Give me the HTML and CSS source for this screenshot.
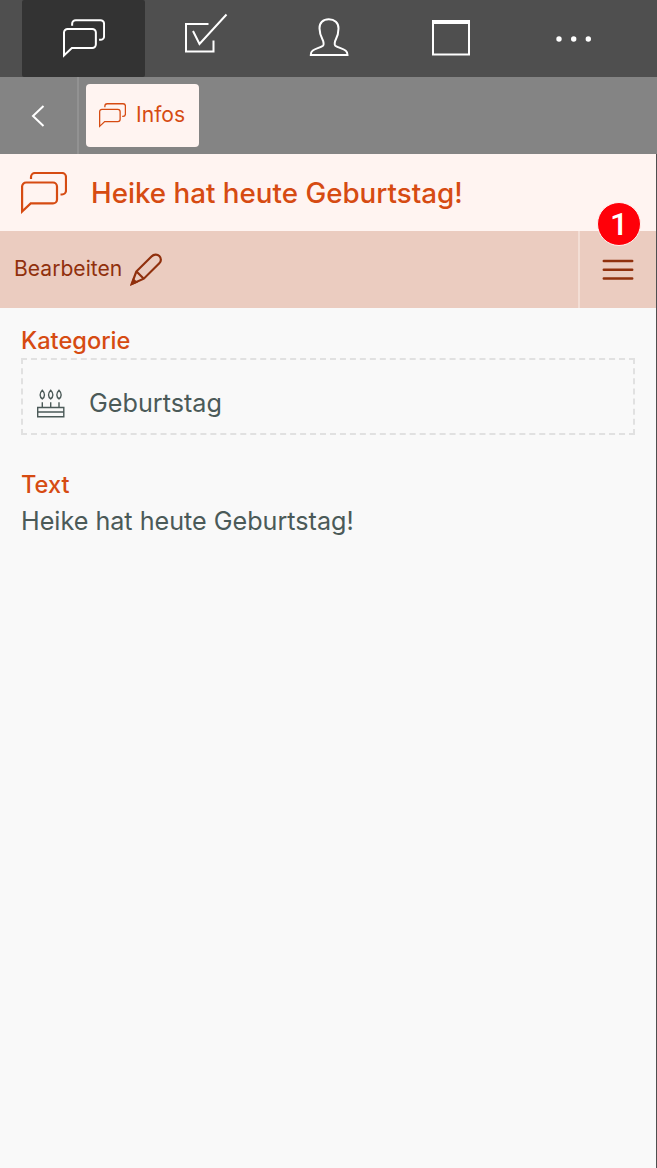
FILE: index.html
```html
<!DOCTYPE html>
<html lang="de">
<head>
<meta charset="utf-8">
<meta name="viewport" content="width=device-width, initial-scale=1">
<title>Infos</title>
<link rel="stylesheet" href="styles.css">
</head>
<body>
<svg class="defs" aria-hidden="true">
  <symbol id="chat" viewBox="0 0 46 42">
    <path d="M1.100 39.500V14.500a4 4 0 0 1 4-4H32a4 4 0 0 1 4 4V27.400a4 4 0 0 1-4 4H9.700Z"/>
    <path d="M10 7V5a4 4 0 0 1 4-4H41a4 4 0 0 1 4 4V18.500a4 4 0 0 1-4 4H39.500"/>
  </symbol>
</svg>
<nav class="tabs">
  <a class="tab active"><svg class="chat-nav" width="42" height="39"><use href="#chat"/></svg></a>
  <a class="tab"><svg class="check" width="44" height="42" viewBox="184 13 44 42"><path d="M208.500 24H186V51.500H213.500V40.500M193 31l6.500 13L226.500 14.500"/></svg></a>
  <a class="tab"><svg class="person" width="40" height="40" viewBox="308.500 17 40 40"><path d="M328.300 19.200c-5.800 0-9.500 3.800-9.300 9.200.1 5.800 1.200 7.900 3 11.200 1.100 2 1.600 5.200.5 6.100-2.900 2.100-7.700 2.900-10.500 5-1.400 1-1.700 2.600-1.700 4.400H347c0-1.800-.4-3.400-1.700-4.400-2.800-2.100-7.600-2.900-10.500-5-1.100-.9-.6-4.100.5-6.100 1.800-3.300 2.600-5.400 2.700-11.200.1-5.400-3.900-9.200-9.700-9.200Z"/></svg></a>
  <a class="tab"><svg class="window" width="38" height="36" viewBox="0 0 38 36"><path d="M1 2V34.600H37V2"/><path class="solid" d="M0 0H38V4H0Z"/></svg></a>
  <a class="tab"><svg class="dots" width="36" height="6" viewBox="0 0 36 6"><circle cx="3" cy="3" r="2.700"/><circle cx="17.700" cy="3" r="2.700"/><circle cx="32.300" cy="3" r="2.700"/></svg></a>
</nav>
<div class="crumbs">
  <a class="back"><svg width="14" height="22" viewBox="0 0 14 22"><path d="M12.500 1L2 11L12.500 21"/></svg></a>
  <a class="crumb"><svg class="chat-small" width="27" height="25"><use href="#chat"/></svg><span>Infos</span></a>
</div>
<main class="page">
  <header class="title"><svg class="chat-title" width="46" height="42"><use href="#chat"/></svg><h1>Heike hat heute Geburtstag!</h1></header>
  <div class="toolbar">
    <a class="edit"><span>Bearbeiten</span><svg width="34" height="34" viewBox="130 252 34 34"><path d="M131.700 284L136.300 271.500L151.500 256.500C154 254 157.300 254 159.300 256C161.400 258.100 161.400 261.200 159.300 263.200L143.800 278.700ZM136.500 271.500L143.800 278.700"/><path class="tip" d="M130.500 285.500L133 278L138 282.500Z"/></svg></a>
    <a class="menu"><svg width="32" height="22" viewBox="0 0 32 22"><path d="M1.800 2H30.200M1.800 10.800H30.200M1.800 19.600H30.200"/></svg><span class="badge">1</span></a>
  </div>
  <section class="content">
    <h2>Kategorie</h2>
    <div class="category"><svg class="cake" width="28" height="29" viewBox="0 0 28 29"><path d="M.7 18.500H26.800V27.800H.7ZM.7 23H26.800M5.300 13.300V18.500M13.700 13.300V18.500M22 13.300V18.500"/><path d="M5.300 1.300C8.300 4.300 8.100 8 5.300 9.900C2.500 8 2.300 4.300 5.300 1.300ZM13.700 1.300C16.700 4.300 16.500 8 13.700 9.900C10.900 8 10.700 4.300 13.700 1.300ZM22 1.300C25 4.300 24.800 8 22 9.900C19.200 8 19 4.300 22 1.300Z"/></svg><span>Geburtstag</span></div>
    <h2>Text</h2>
    <p>Heike hat heute Geburtstag!</p>
  </section>
</main>
</body>
</html>
```
FILE: styles.css
```css
* { box-sizing: border-box; }
body { margin: 0; min-height: 1168px; display: flex; flex-direction: column; background: #f9f9f9; color: #4b5a58; font-family: Inter, sans-serif; }
svg { display: block; flex: none; fill: none; stroke: currentColor; stroke-width: 2.200; }
.defs { display: none; }
.tabs { height: 77px; padding: 0 21px 0 22px; display: grid; grid-template-columns: 123px repeat(4, 122.500px); background: #4f4f4f; color: #fff; }
.tab { display: flex; align-items: center; justify-content: center; }
.active { background: #333; border-radius: 2px; }
.chat-nav { margin: 0 0 1px 0; }
.check { margin-bottom: 9px; stroke-width: 2; }
.person { margin: 0 0 3px 0; stroke-width: 2; }
.window { margin-bottom: 1px; stroke-width: 2; }
.solid, .dots { fill: currentColor; stroke: none; }
.dots { margin-top: 1px; }
.crumbs { height: 77px; display: flex; align-items: center; background: #848484; }
.back { width: 79px; height: 77px; padding: 0 1px 0 0; border-right: 2px solid #929292; display: flex; align-items: center; justify-content: center; color: #fff; }
.back svg { stroke-width: 2; }
.crumb { width: 113px; height: 63px; margin-left: 7px; padding-left: 13px; display: flex; align-items: center; gap: 10px; border-radius: 4px; background: #fff4f1; color: #d64b12; font-size: 21.100px; }
.crumb span { padding-bottom: 2px; }
.page { flex: 1; border-right: 1px solid #4f4f4f; }
.title { height: 77px; padding-left: 21px; display: flex; align-items: center; gap: 24px; background: #fff4f1; color: #d64b12; }
h1, h2, p { margin: 0; }
h1 { padding-top: 1px; font-size: 27.750px; font-weight: 500; }
.toolbar { height: 77px; display: flex; justify-content: space-between; background: #ebccc0; color: #90300d; }
.edit { padding: 0 0 2px 14px; display: flex; align-items: center; gap: 8px; font-size: 21.100px; }
.edit .tip { fill: currentColor; stroke: none; }
.menu { position: relative; width: 78px; border-left: 2px solid #f3ded5; display: flex; align-items: center; justify-content: center; }
.menu svg { stroke-width: 2.500; stroke-linecap: round; }
.badge { position: absolute; top: -29px; left: 17px; width: 44px; height: 44px; border: 1px solid #fff4f1; border-radius: 50%; background: #ff0009; color: #fff; display: flex; align-items: center; justify-content: center; font: 500 32px Roboto, sans-serif; }
.content { padding: 17px 21px; }
h2 { color: #d64b12; font-size: 23.600px; font-weight: 500; line-height: 32px; }
.category { height: 77px; margin: 1px 0 34px; padding: 13px 14px 0; display: flex; align-items: center; gap: 24px; border: 2px dashed #e1e1e1; font-size: 25.200px; }
.cake { stroke-width: 1.400; }
p { font-size: 25.150px; line-height: 41px; }
```
